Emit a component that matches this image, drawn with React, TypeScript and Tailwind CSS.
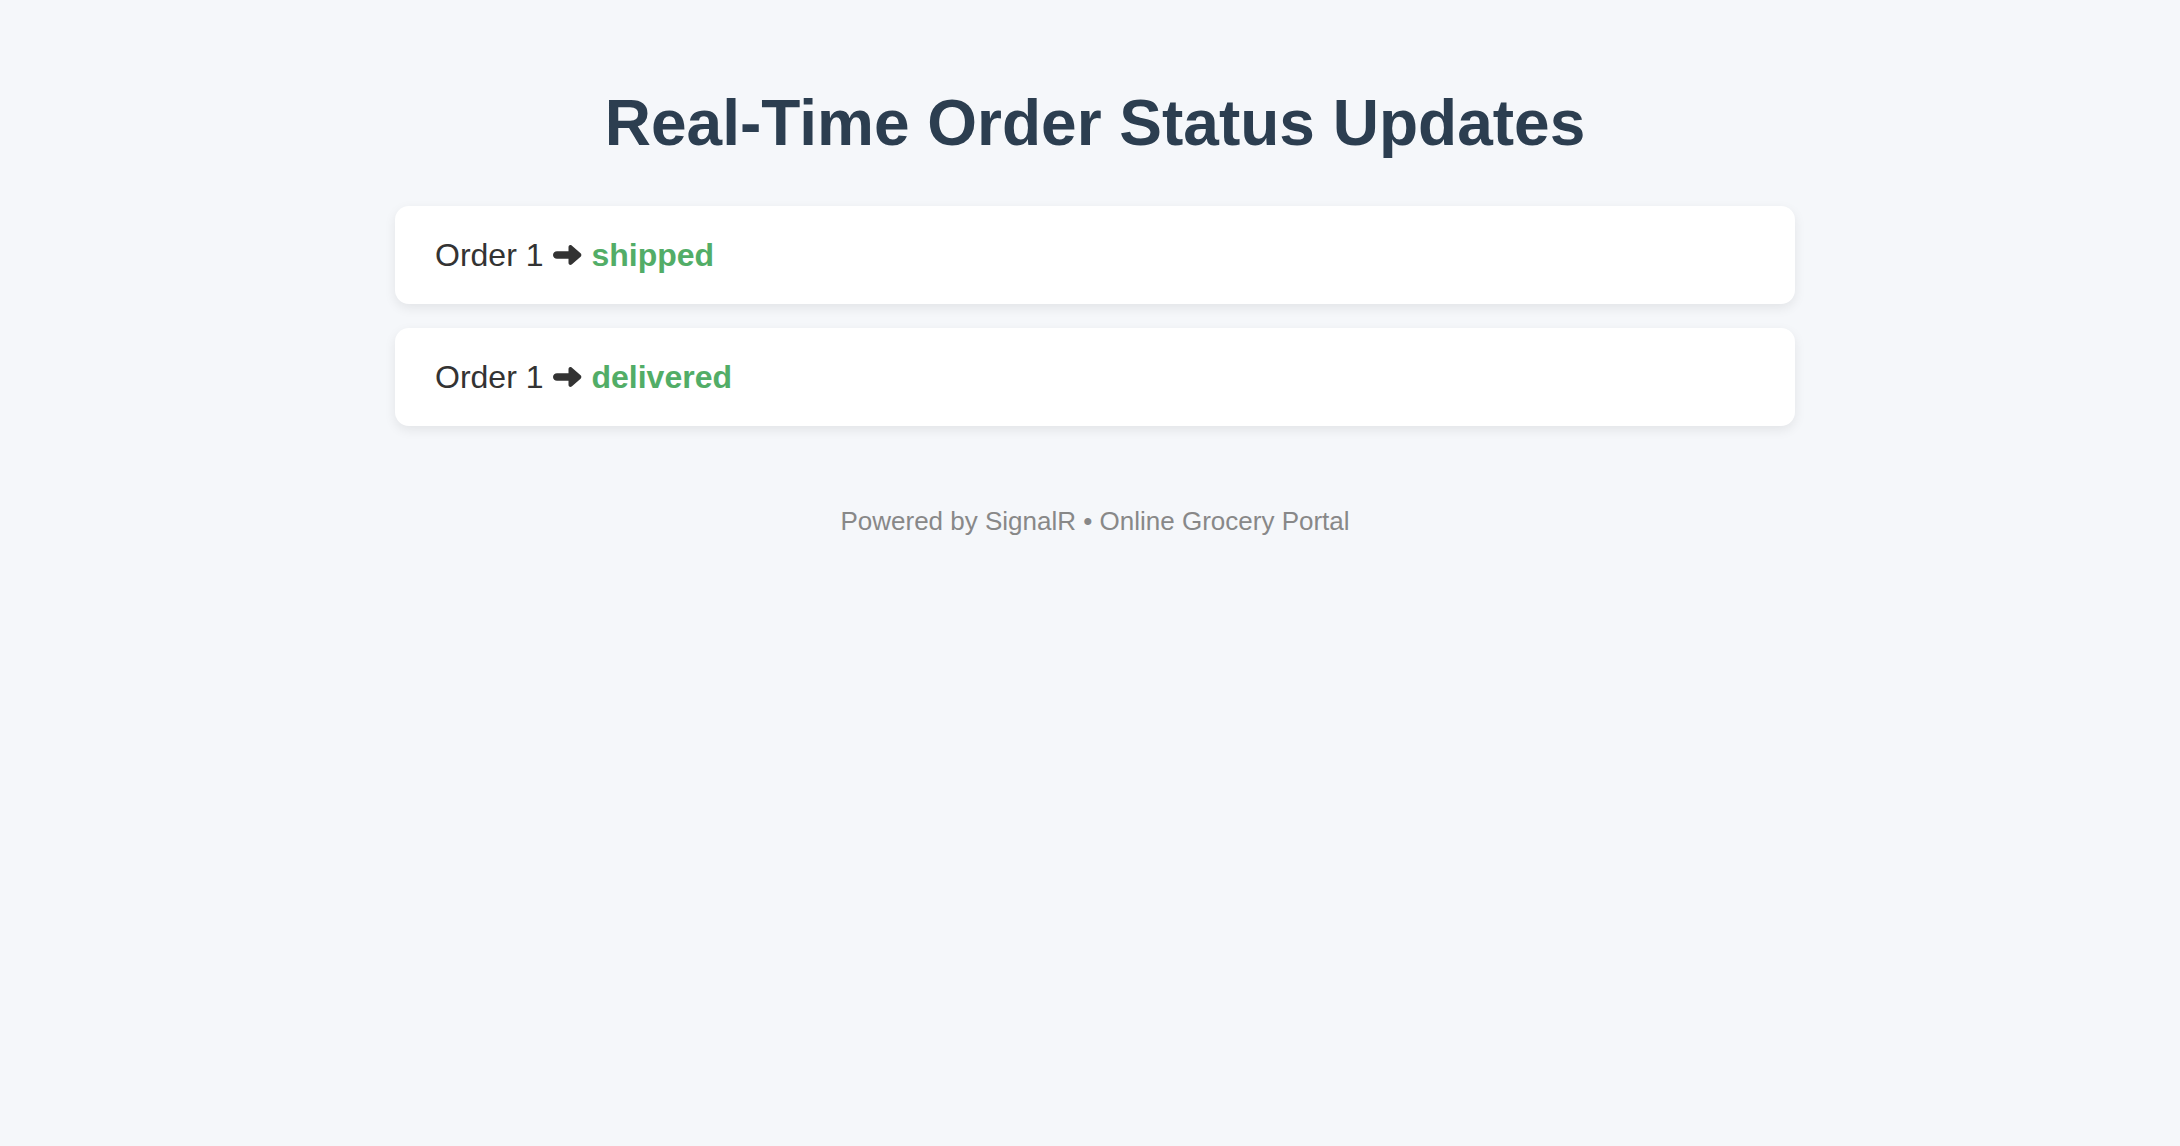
import React from "react";

function Arrow() {
  return (
    <svg
      width="29"
      height="22"
      viewBox="0 0 29 22"
      className="inline-block shrink-0 ml-[10px] mr-[9px]"
      aria-hidden="true"
    >
      <path
        d="M4 7.2 H15.5 V3.2 C15.5 1.2 17.2 0.4 18.7 1.5 L27.6 9.3 C28.6 10.2 28.6 11.8 27.6 12.7 L18.7 20.5 C17.2 21.6 15.5 20.8 15.5 18.8 V14.8 H4 C1.9 14.8 0 13.2 0 11 C0 8.8 1.9 7.2 4 7.2 Z"
        fill="#333333"
      />
    </svg>
  );
}

function OrderCard({ status }: { status: string }) {
  return (
    <div className="h-[98px] w-full bg-white rounded-[14px] shadow-[0_4px_12px_rgba(0,0,0,0.08)] flex items-center px-[40px]">
      <span className="text-[32px] text-[#333333] leading-none">Order 1</span>
      <Arrow />
      <span className="text-[32px] font-bold text-[#52ad67] leading-none">{status}</span>
    </div>
  );
}

export default function App() {
  return (
    <div
      className="min-h-[1146px] w-full bg-[#f5f7fa] flex flex-col items-center pt-[87px] pl-[10px]"
      style={{ fontFamily: '"Liberation Sans", Arial, sans-serif' }}
    >
      <h1 className="text-[64px] font-bold text-[#2c3e50] leading-[73.5px] m-0">
        Real-Time Order Status Updates
      </h1>
      <div className="w-[1400px] flex flex-col gap-[24px] mt-[45px]">
        <OrderCard status="shipped" />
        <OrderCard status="delivered" />
      </div>
      <p className="mt-[80px] text-[26px] text-[#888888] leading-[30px]">
        Powered by SignalR • Online Grocery Portal
      </p>
    </div>
  );
}
